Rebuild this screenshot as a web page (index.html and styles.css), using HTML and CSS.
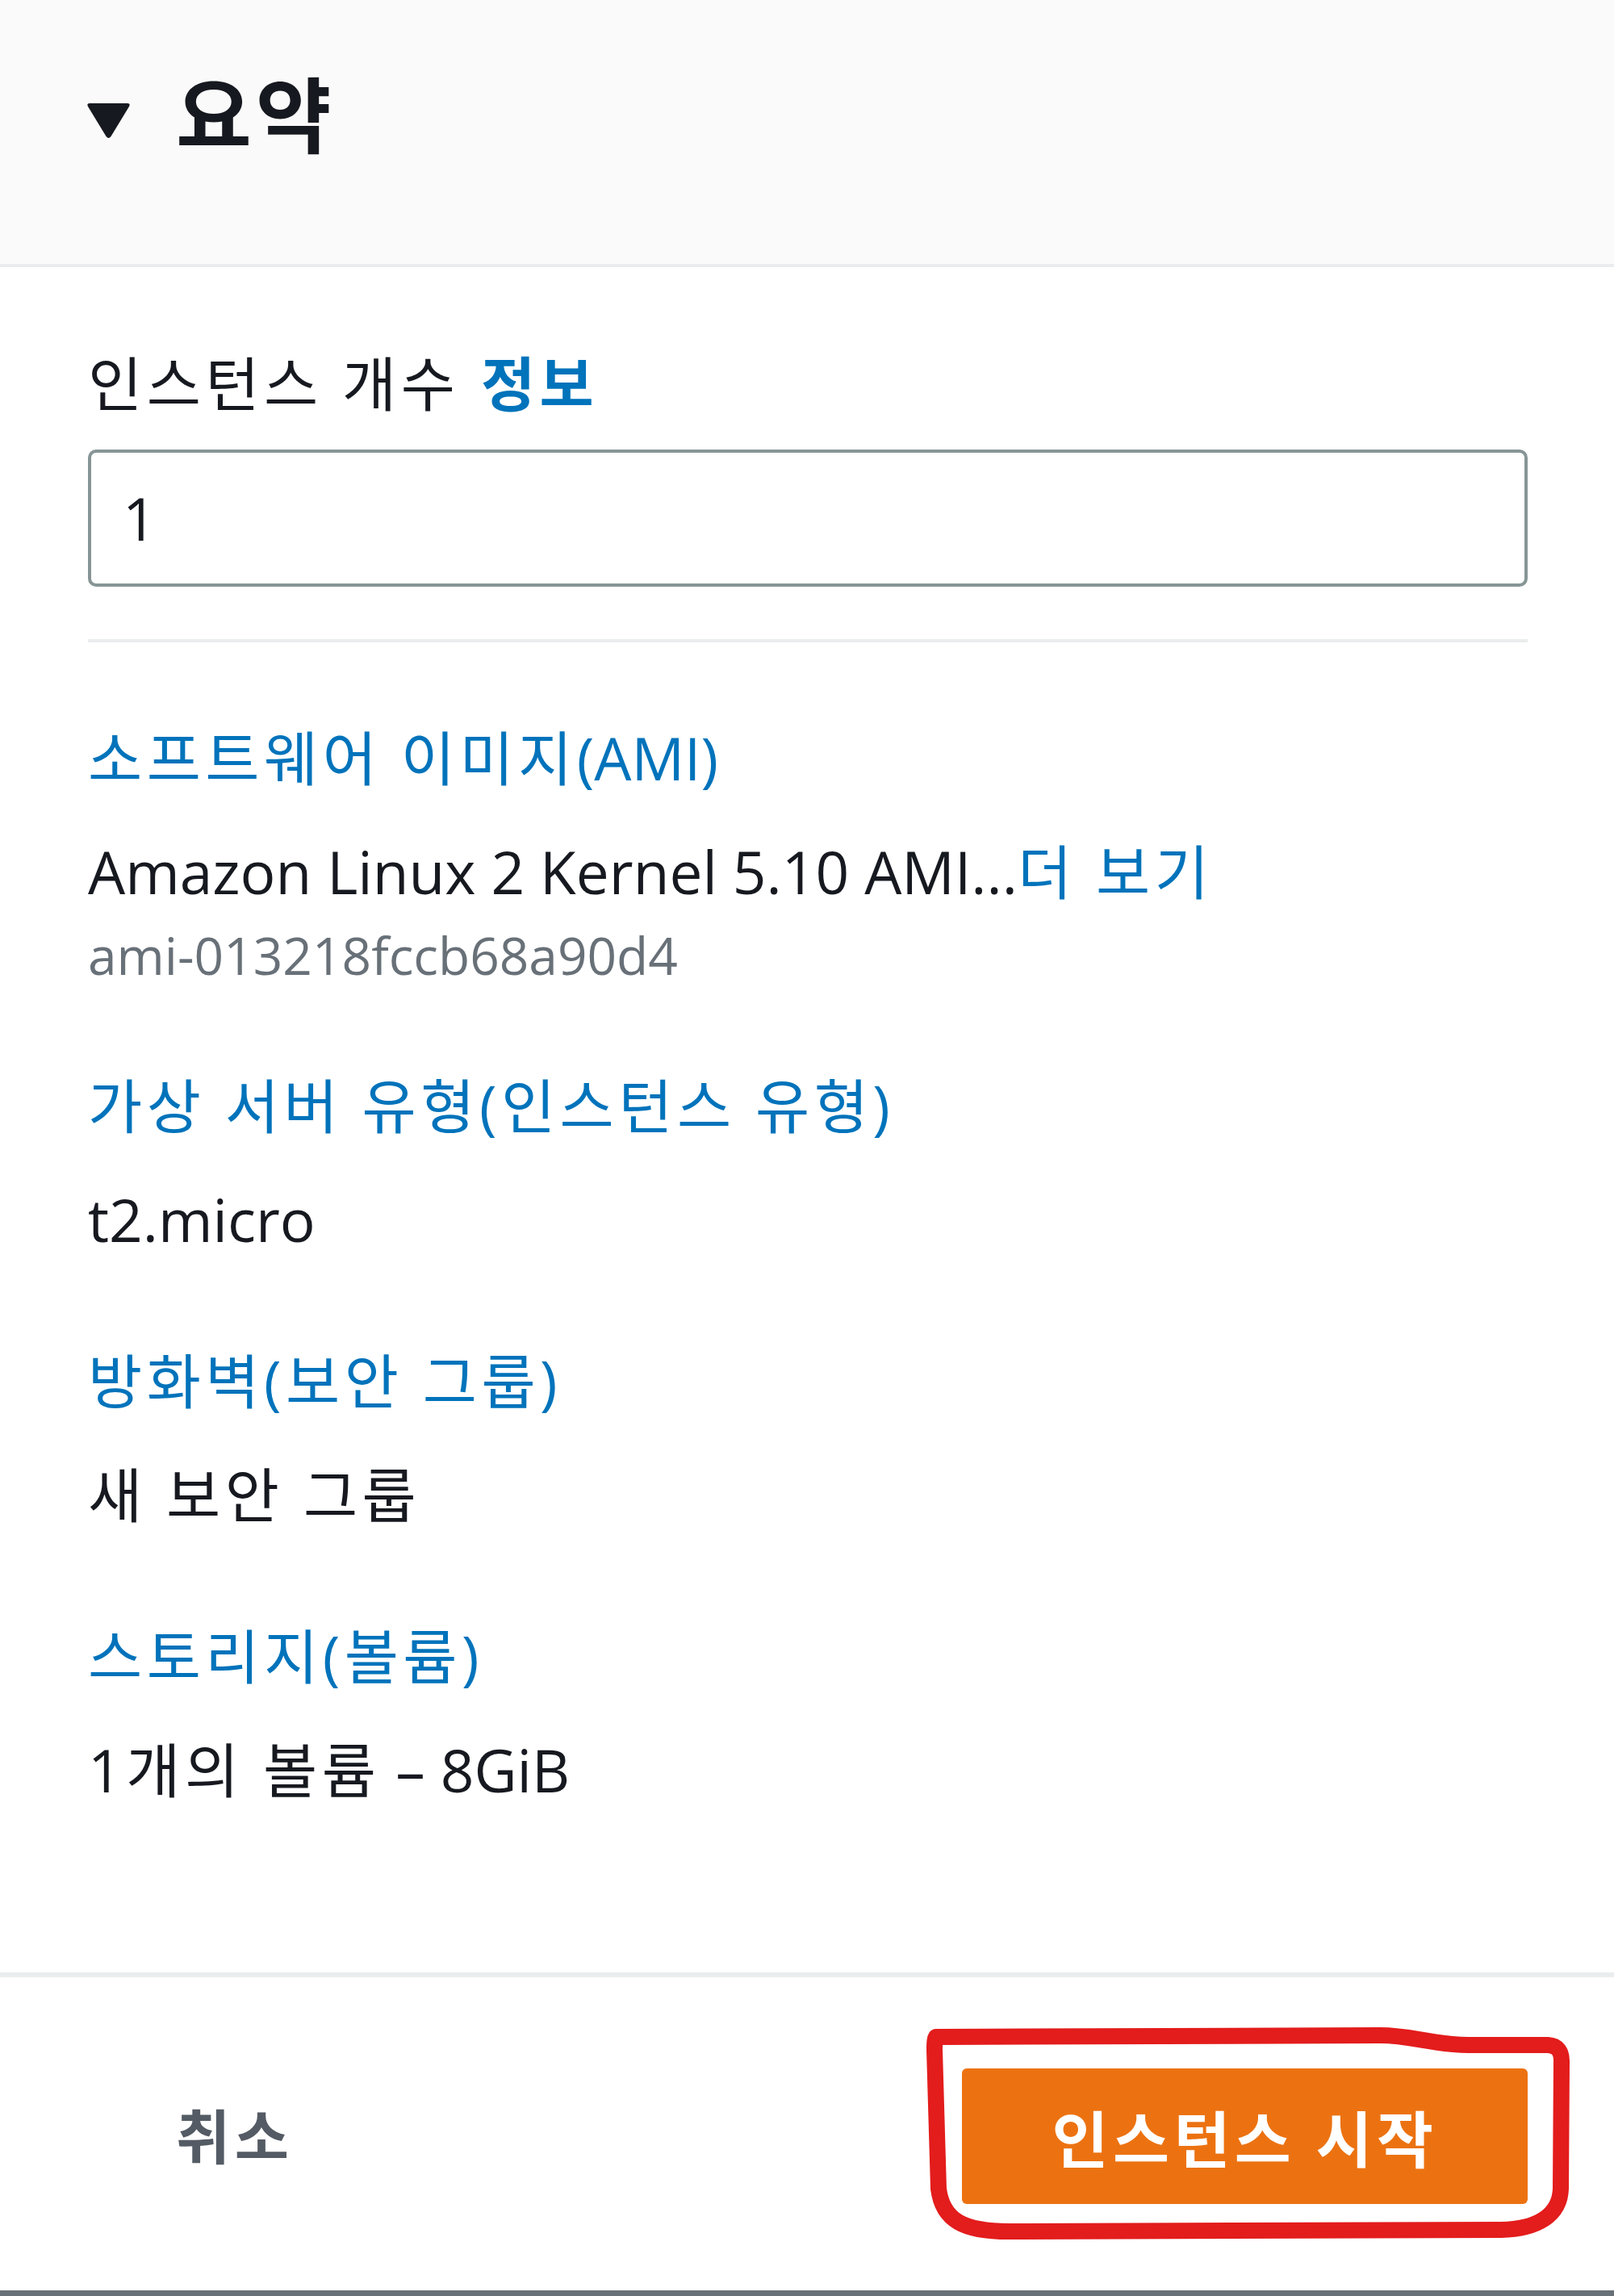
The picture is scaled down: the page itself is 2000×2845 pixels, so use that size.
FILE: index.html
```html
<!DOCTYPE html>
<html lang="ko">
<head>
<meta charset="utf-8">
<title>요약</title>
<link rel="stylesheet" href="styles.css">
</head>
<body>
<div class="panel">
  <header class="panel-header">
    <svg class="caret" viewBox="0 0 55 45" aria-hidden="true"><path d="M4 1 H51 Q55 1 53 5 L30.5 42 Q27.5 46 24.5 42 L2 5 Q0 1 4 1 Z"/></svg>
    <h2 class="panel-title">요약</h2>
  </header>

  <main class="panel-body">
    <div class="field">
      <div class="field-label ko">인스턴스 개수 <a class="info-link">정보</a></div>
      <div class="input">1</div>
    </div>
    <div class="divider"></div>

    <div class="items">
      <div class="item">
        <div class="item-title"><span class="ko">소프트웨어 이미지</span>(AMI)</div>
        <div class="item-value">Amazon Linux 2 Kernel 5.10 AMI...<a class="more-link ko">더 보기</a></div>
        <div class="item-sub">ami-013218fccb68a90d4</div>
      </div>
      <div class="item">
        <div class="item-title ko">가상 서버 유형(인스턴스 유형)</div>
        <div class="item-value">t2.micro</div>
      </div>
      <div class="item">
        <div class="item-title ko">방화벽(보안 그룹)</div>
        <div class="item-value ko">새 보안 그룹</div>
      </div>
      <div class="item">
        <div class="item-title ko">스토리지(볼륨)</div>
        <div class="item-value"><span class="ko">1개의 볼륨</span> – 8GiB</div>
      </div>
    </div>
  </main>

  <footer class="panel-footer">
    <button class="btn-cancel ko" type="button">취소</button>
    <button class="btn-primary ko" type="button">인스턴스 시작</button>
  </footer>

  <svg class="annotation" viewBox="0 0 2000 2845" aria-hidden="true">
    <path d="M1160 2524 L1710 2522 C1750 2522 1770 2533 1820 2534 L1918 2534 Q1936 2535 1935 2556 L1934 2712 C1933 2745 1905 2762 1860 2763 L1250 2765 C1195 2765 1168 2752 1163 2712 L1158 2540 Q1158 2525 1160 2524 Z"/>
  </svg>
</div>
</body>
</html>
```

FILE: styles.css
```css
* { box-sizing: border-box; }

html, body {
  margin: 0;
  padding: 0;
  background: #ffffff;
}

body {
  font-family: "Open Sans", "Noto Sans CJK KR", sans-serif;
  color: #16191f;
}

.panel {
  position: relative;
  width: 2000px;
  height: 2845px;
  display: flex;
  flex-direction: column;
  overflow: hidden;
}

/* Korean text runs are set a little wider, like the original UI font */
.ko {
  letter-spacing: 5.5px;
}

/* Header */
.panel-header {
  height: 331px;
  flex: none;
  background: #fafafa;
  border-bottom: 4px solid #eaeded;
  display: flex;
  align-items: flex-start;
  padding: 83px 0 0 107px;
}

.caret {
  width: 55px;
  height: 45px;
  margin-top: 44px;
  fill: #16191f;
  flex: none;
}

.panel-title {
  margin: 0 0 0 56px;
  font-size: 102px;
  line-height: 120px;
  font-weight: 700;
  letter-spacing: 5px;
  color: #16191f;
}

/* Body */
.panel-body {
  flex: 1;
  padding: 94px 107px 0 109px;
  font-size: 73px;
  line-height: 100px;
}

.field-label {
  color: #16191f;
}

.info-link {
  color: #0073bb;
  font-weight: 700;
  margin-left: 2px;
}

.input {
  margin-top: 32px;
  height: 170px;
  border: 4px solid #879596;
  border-radius: 10px;
  display: flex;
  align-items: center;
  padding-left: 39px;
  color: #16191f;
}

.divider {
  margin-top: 65px;
  height: 4px;
  background: #eaeded;
}

.items {
  padding-top: 93px;
}

.item + .item {
  margin-top: 100px;
}

.item-title {
  color: #0073bb;
}

.item-value {
  margin-top: 41px;
  color: #16191f;
}

.more-link {
  color: #0073bb;
}

.item-sub {
  margin-top: 18px;
  font-size: 64px;
  line-height: 72px;
  color: #687078;
}

/* Footer */
.panel-footer {
  flex: none;
  height: 401px;
  border-top: 6px solid #eaeded;
  border-bottom: 7px solid #687078;
  display: flex;
  align-items: center;
  justify-content: space-between;
  padding: 6px 107px 0 218px;
}

.btn-cancel {
  background: none;
  border: none;
  padding: 0;
  font-family: inherit;
  font-size: 73px;
  line-height: 100px;
  font-weight: 700;
  color: #545b64;
}

.btn-primary {
  width: 701px;
  height: 168px;
  border: none;
  border-radius: 6px;
  background: #ec7211;
  color: #ffffff;
  font-family: inherit;
  font-size: 76px;
  font-weight: 700;
  padding: 0;
}

/* Hand-drawn annotation overlay */
.annotation {
  position: absolute;
  left: 0;
  top: 0;
  width: 2000px;
  height: 2845px;
  pointer-events: none;
  fill: none;
  stroke: #e31c1c;
  stroke-width: 20px;
  stroke-linejoin: round;
  stroke-linecap: round;
}
```
